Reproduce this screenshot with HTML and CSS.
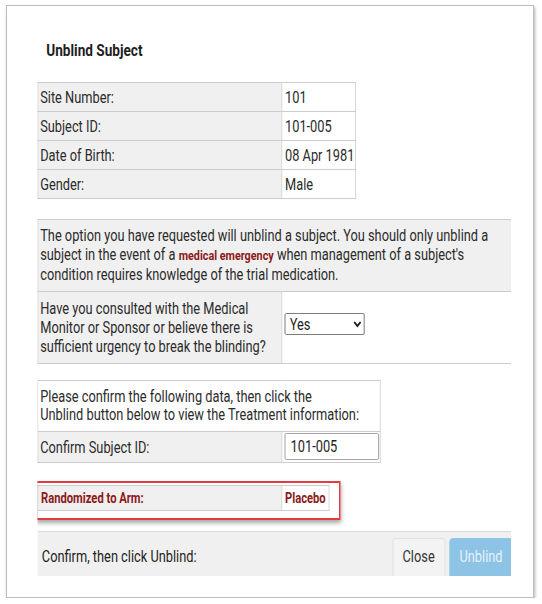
FILE: index.html
```html
<!DOCTYPE html>
<html lang="en">
<head>
  <meta charset="UTF-8">
  <meta name="viewport" content="width=device-width, initial-scale=1.0">
  <title>Unblind Subject</title>
  <link rel="stylesheet" href="styles.css">
</head>
<body>

  <div class="modal">
    <div class="modal-inner">
      <h2 class="modal-title">Unblind Subject</h2>

      <div class="modal-body">
        <table class="grid grid-info">
          <colgroup><col class="col-label"><col></colgroup>
          <tr><td class="label">Site Number:</td><td class="value">101</td></tr>
          <tr><td class="label">Subject ID:</td><td class="value">101-005</td></tr>
          <tr><td class="label">Date of Birth:</td><td class="value">08 Apr 1981</td></tr>
          <tr><td class="label">Gender:</td><td class="value">Male</td></tr>
        </table>

        <table class="grid grid-warning">
          <colgroup><col class="col-label"><col></colgroup>
          <tr>
            <td class="label message" colspan="2">
              The option you have requested will unblind a subject. You should only unblind a<br>
              subject in the event of a <span class="alert">medical emergency</span> when management of a subject's<br>
              condition requires knowledge of the trial medication.
            </td>
          </tr>
          <tr>
            <td class="label question">Have you consulted with the Medical<br>Monitor or Sponsor or believe there is<br>sufficient urgency to break the blinding?</td>
            <td class="value control-cell">
              <select class="field-select" id="consulted" name="consulted">
                <option value="yes">Yes</option>
                <option value="no">No</option>
              </select>
            </td>
          </tr>
        </table>

        <table class="grid grid-confirm">
          <colgroup><col class="col-label"><col></colgroup>
          <tr>
            <td class="value message" colspan="2">Please confirm the following data, then click the<br>Unblind button below to view the Treatment information:</td>
          </tr>
          <tr>
            <td class="label">Confirm Subject ID:</td>
            <td class="value input-cell"><input type="text" class="field-input" id="confirmId" name="confirmId" value="101-005"></td>
          </tr>
        </table>

        <div class="highlight">
          <table class="grid grid-arm">
            <colgroup><col class="col-label"><col></colgroup>
            <tr>
              <td class="label arm">Randomized to Arm:</td>
              <td class="value arm">Placebo</td>
            </tr>
          </table>
        </div>

        <div class="modal-footer">
          <span class="footer-text">Confirm, then click Unblind:</span>
          <button type="button" class="btn btn-close">Close</button>
          <button type="button" class="btn btn-unblind" disabled>Unblind</button>
        </div>
      </div>
    </div>
  </div>

</body>
</html>
```

FILE: styles.css
```css
body {
  margin: 0;
  padding: 0;
  background: #fff;
  font-family: 'Roboto', 'Liberation Sans', sans-serif;
  font-size: 16px;
  color: #2b2b2b;
}

/* the whole dialog is drawn narrow, like the capture */
.modal {
  box-sizing: border-box;
  width: 528px;
  height: 593px;
  margin: 5px 0 0 6px;
  border: 1px solid #bdbdbd;
  background: #fff;
  box-shadow: 1px 2px 3px rgba(0, 0, 0, 0.3);
  overflow: hidden;
}

.modal-inner {
  width: 658px;
  transform: scaleX(0.8);
  transform-origin: 0 0;
}

.modal-title {
  margin: 0;
  padding: 34px 0 22px 49px;
  font-size: 17px;
  font-weight: bold;
  line-height: 20px;
  color: #1e1e1e;
}

.modal-body {
  margin-left: 37.5px;
  width: 592.5px;
  overflow: hidden;
}

.grid {
  border-collapse: collapse;
  table-layout: fixed;
  margin-bottom: 18px;
}

.col-label {
  width: 305px;
}

.grid td {
  border: 1px solid #cccccc;
  padding: 5px 3px 4px 3px;
  line-height: 19px;
  vertical-align: middle;
  white-space: nowrap;
}

.grid .label {
  background: #f0f0f0;
}

.grid .value {
  background: #fff;
  padding-left: 4px;
}

.grid-info {
  width: 398px;
  margin-bottom: 20px;
}

.grid-warning {
  width: 640px;
  margin-bottom: 16px;
}

.grid-warning .message {
  padding: 6px 3px 7px 3px;
}

.grid-warning .question {
  padding: 7px 3px 7px 3px;
}

.alert {
  color: #8b1a1a;
  font-weight: bold;
  font-size: 13.5px;
}

.grid .control-cell {
  padding: 0 3px 8px 3px;
}

.field-select {
  width: 100px;
  height: 22px;
  font-family: inherit;
  font-size: 16px;
  border: 1px solid #6e6e6e;
  border-radius: 2px;
  background: #fff;
  color: #1e1e1e;
  padding: 0 0 0 2px;
}

.grid-confirm {
  width: 429px;
}

.grid-confirm .message {
  padding: 7px 3px 7px 3px;
  line-height: 18px;
}

.grid .input-cell {
  padding: 1px 3px 2px 3px;
}

.field-input {
  box-sizing: border-box;
  width: 118px;
  height: 27px;
  padding: 0 7px;
  font-family: inherit;
  font-size: 16px;
  color: #1e1e1e;
  border: 1px solid #9a9a9a;
  border-radius: 2px;
}

.highlight {
  width: fit-content;
  margin: 0 0 11px -2px;
  padding: 2px 12.5px 7px 0;
  border: 2px solid #e23c40;
  box-shadow: 0 3px 5px rgba(0, 0, 0, 0.35);
}

.grid-arm {
  width: 365px;
  margin: 0;
}

.grid .arm {
  color: #8b1a1a;
  font-weight: bold;
  font-size: 14px;
  line-height: 17px;
  padding: 4px 3px 3px 4px;
}

.modal-footer {
  display: flex;
  align-items: flex-start;
  width: 595px;
  height: 45px;
  box-sizing: border-box;
  border-top: 1px solid #dadada;
  background: #f0f0f0;
  overflow: hidden;
  padding: 6px 0 0 6px;
}

.footer-text {
  flex: 1;
  padding-top: 9px;
  line-height: 19px;
  color: #1e1e1e;
}

.btn {
  height: 44px;
  flex: none;
  font-family: inherit;
  font-size: 16px;
  border-radius: 4px;
  padding: 0 0 8px 0;
}

.btn-close {
  width: 66px;
  margin-right: 5px;
  background: #f3f3f3;
  border: 1px solid #dedede;
  color: #333;
}

.btn-unblind {
  width: 80px;
  background: #8dc3e5;
  border: 1px solid #8dc3e5;
  color: #e6f2fa;
}
```
